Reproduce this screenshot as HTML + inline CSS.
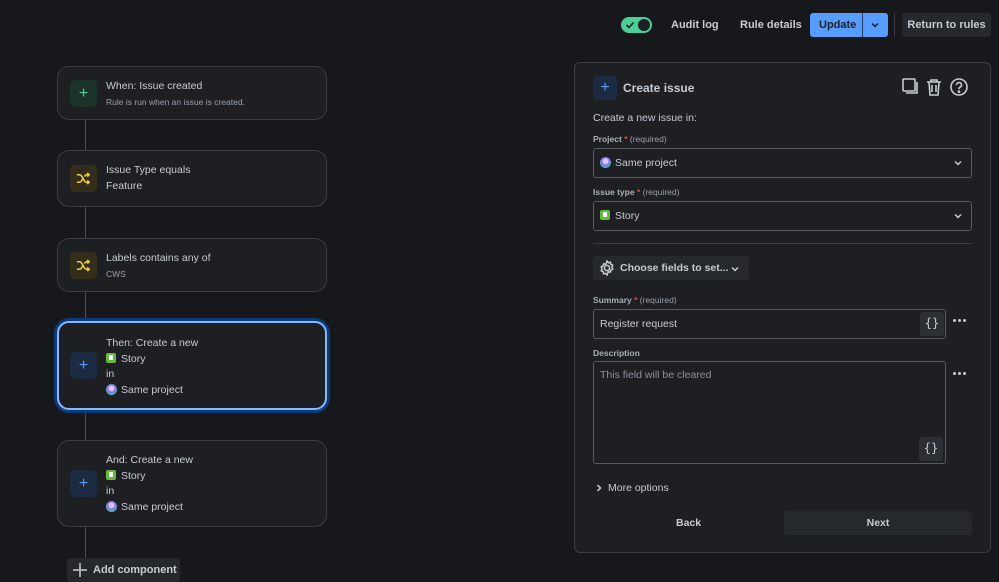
<!DOCTYPE html><html><head><style>
*{box-sizing:border-box;margin:0;padding:0}
body{width:999px;height:581px;background:#17181b;font-family:"Liberation Sans",sans-serif;color:#c7ccd3;position:relative;overflow:hidden;font-size:11px}
.a{position:absolute}
.card{position:absolute;left:57px;width:270px;border:1px solid #3a3e44;border-radius:12px;background:#1d1f23}
.ib{position:absolute;left:12px;width:27px;height:27px;border-radius:5px;display:flex;align-items:center;justify-content:center}
.t{position:absolute;left:48px;font-size:10.5px;line-height:15.5px;color:#c7ccd3}
.s{font-size:8.5px;color:#9aa1aa}
.line{position:absolute;left:85px;width:1px;background:#4a4e55}
.story{display:inline-block;width:10px;height:10px;background:#63ba3c;border-radius:2px;vertical-align:-1px;margin-right:5px;position:relative}
.story:after{content:"";position:absolute;left:3px;top:2px;width:4px;height:5px;background:#fff}
.proj{display:inline-block;width:11px;height:11px;border-radius:50%;background:radial-gradient(circle at 50% 40%,#d9c7ff 0 25%,#8a6bd8 45%,#3fc6c9 75%);vertical-align:-2px;margin-right:4px}
.lbl{position:absolute;left:593px;font-size:8.5px;font-weight:bold;color:#a9b0b8}
.lbl i{color:#e5493a;font-style:normal}.lbl b{font-weight:normal;color:#9aa1aa}
.sel{position:absolute;left:593px;width:379px;height:30px;border:1px solid #565b62;border-radius:3px;background:#1d1f23;padding-left:6px;line-height:28px;font-size:10.5px}
.chev{position:absolute;right:9px;top:11px}
.br{position:absolute;width:24px;height:24px;background:#2c2f34;border-radius:3px;font-family:"DejaVu Sans Mono",monospace;font-size:12px;text-align:center;line-height:23px;color:#c7ccd3}
.dots{position:absolute;left:953px;width:16px;height:4px}
.dots i{float:left;width:3px;height:3px;border-radius:50%;background:#c7ccd3;margin-right:2px}
</style></head><body>
<svg width="0" height="0" style="position:absolute"><defs>
<symbol id="cv" viewBox="0 0 8 6"><path d="M1 1.5l3 3 3-3" fill="none" stroke="currentColor" stroke-width="1.5"/></symbol>
<symbol id="sh" viewBox="0 0 16 16"><path d="M1 4h3c3 0 4 8 7 8h3M1 12h3c1.5 0 2.3-2 3-3.5M9 6c.8-1.3 1.5-2 2-2h3M12 2l2 2-2 2M12 10l2 2-2 2" fill="none" stroke="#f5cd47" stroke-width="1.6"/></symbol>
</defs></svg>
<!-- top bar -->
<div class="a" style="left:621px;top:17px;width:31px;height:16px;border-radius:8px;background:#4bce97"></div>
<div class="a" style="left:638px;top:19px;width:12px;height:12px;border-radius:50%;background:#1d1f23"></div>
<svg class="a" style="left:625px;top:20px" width="10" height="10"><path d="M1.5 5l2.5 2.5 4.5-5" fill="none" stroke="#1d1f23" stroke-width="1.6"/></svg>
<div class="a" style="left:671px;top:19px;font-size:11px;font-weight:bold;color:#c7ccd3">Audit log</div>
<div class="a" style="left:740px;top:19px;font-size:11px;font-weight:bold;color:#c7ccd3">Rule details</div>
<div class="a" style="left:810px;top:13px;width:78px;height:24px;background:#579dff;border-radius:3px"></div>
<div class="a" style="left:862px;top:13px;width:1px;height:24px;background:#1d3a66"></div>
<div class="a" style="left:819px;top:19px;font-size:11px;font-weight:bold;color:#1d2125">Update</div>
<svg class="a" style="left:871px;top:22px;color:#1d2125" width="8" height="6"><use href="#cv"/></svg>
<div class="a" style="left:894px;top:13px;width:1px;height:24px;background:#3a3e44"></div>
<div class="a" style="left:902px;top:13px;width:89px;height:24px;background:#25282c;border-radius:3px;font-size:11px;font-weight:bold;text-align:center;line-height:24px">Return to rules</div>

<!-- left flow -->
<div class="line" style="top:119px;height:31px"></div>
<div class="line" style="top:207px;height:31px"></div>
<div class="line" style="top:291px;height:31px"></div>
<div class="line" style="top:409px;height:31px"></div>
<div class="line" style="top:526px;height:32px"></div>

<div class="card" style="top:66px;height:54px">
 <div class="ib" style="top:13px;background:#1c3329;color:#4bce97;font-size:16px">+</div>
 <div class="t" style="top:12px">When: Issue created<br><span class="s">Rule is run when an issue is created.</span></div>
</div>
<div class="card" style="top:150px;height:57px">
 <div class="ib" style="top:14px;background:#332e1b"><svg width="15" height="15"><use href="#sh"/></svg></div>
 <div class="t" style="top:12px">Issue Type equals<br>Feature</div>
</div>
<div class="card" style="top:238px;height:54px">
 <div class="ib" style="top:13px;background:#332e1b"><svg width="15" height="15"><use href="#sh"/></svg></div>
 <div class="t" style="top:12px">Labels contains any of<br><span class="s">CWS</span></div>
</div>
<div class="card" style="top:321px;height:89px;border:2px solid #85b8ff;box-shadow:0 0 0 3px #0c3a78">
 <div class="ib" style="top:29px;left:11px;background:#1c2b41;color:#579dff;font-size:16px">+</div>
 <div class="t" style="top:13px;left:47px">Then: Create a new<br><span class="story"></span>Story<br>in<br><span class="proj"></span>Same project</div>
</div>
<div class="card" style="top:440px;height:87px">
 <div class="ib" style="top:29px;background:#1c2b41;color:#579dff;font-size:16px">+</div>
 <div class="t" style="top:12px">And: Create a new<br><span class="story"></span>Story<br>in<br><span class="proj"></span>Same project</div>
</div>
<div class="a" style="left:67px;top:558px;width:113px;height:24px;background:#25282c;border-radius:3px;font-size:11px;font-weight:bold;line-height:24px;padding-left:26px">Add component</div>
<svg class="a" style="left:73px;top:563px" width="14" height="14"><path d="M7 0v14M0 7h14" stroke="#c7ccd3" stroke-width="1.5"/></svg>

<!-- right panel -->
<div class="a" style="left:574px;top:62px;width:417px;height:491px;border:1px solid #3a3e44;border-radius:6px;background:#1d1f23"></div>
<div class="a" style="left:593px;top:76px;width:24px;height:24px;border-radius:4px;background:#1c2b41;color:#579dff;font-size:16px;text-align:center;line-height:23px">+</div>
<div class="a" style="left:623px;top:81px;font-size:12px;font-weight:bold;color:#c7ccd3">Create issue</div>
<svg class="a" style="left:900px;top:77px" width="70" height="20" viewBox="0 0 70 20" fill="none" stroke="#c7ccd3" stroke-width="1.6">
 <rect x="3" y="2" width="12" height="12" rx="1"/><path d="M17 5v11H6"/>
 <path d="M27 5h14M31 5V3h6v2M29 5l1 13h8l1-13M32 8v7M36 8v7"/>
 <circle cx="59" cy="10" r="8"/><path d="M56.5 8a2.5 2.5 0 1 1 3.5 2.3c-1 .4-1 1-1 2"/><circle cx="59" cy="14.6" r=".6" fill="#c7ccd3"/>
</svg>
<div class="a" style="left:593px;top:112px;font-size:10.5px">Create a new issue in:</div>
<div class="lbl" style="top:134px">Project <i>*</i> <b>(required)</b></div>
<div class="sel" style="top:148px"><span class="proj"></span>Same project<svg class="chev" width="8" height="6"><use href="#cv"/></svg></div>
<div class="lbl" style="top:187px">Issue type <i>*</i> <b>(required)</b></div>
<div class="sel" style="top:201px"><span class="story"></span>Story<svg class="chev" width="8" height="6"><use href="#cv"/></svg></div>
<div class="a" style="left:593px;top:243px;width:379px;height:1px;background:#3a3e44"></div>
<div class="a" style="left:593px;top:256px;width:156px;height:24px;background:#25282c;border-radius:3px;font-size:10.5px;font-weight:bold;line-height:24px;padding-left:27px">Choose fields to set...</div>
<svg class="a" style="left:731px;top:266px" width="8" height="6"><use href="#cv"/></svg>
<svg class="a" style="left:599px;top:260px" width="16" height="16" viewBox="0 0 16 16"><path d="M8 1l1.3 1.7 2.1-.5.4 2.1 2 .9-.9 2 .9 2-2 .9-.4 2.1-2.1-.5L8 15l-1.3-1.7-2.1.5-.4-2.1-2-.9.9-2-.9-2 2-.9.4-2.1 2.1.5z" fill="none" stroke="#c7ccd3" stroke-width="1.5"/><circle cx="8" cy="8" r="2.6" fill="none" stroke="#c7ccd3" stroke-width="1.5"/></svg>
<div class="lbl" style="top:295px">Summary <i>*</i> <b>(required)</b></div>
<div class="sel" style="top:309px;width:353px;height:30px">Register request</div>
<div class="br" style="left:920px;top:312px">{}</div>
<div class="dots" style="top:319px"><i></i><i></i><i></i></div>
<div class="lbl" style="top:348px">Description</div>
<div class="sel" style="top:361px;width:353px;height:103px;line-height:normal;padding-top:7px;color:#8c939c">This field will be cleared</div>
<div class="br" style="left:919px;top:437px">{}</div>
<div class="dots" style="top:372px"><i></i><i></i><i></i></div>
<svg class="a" style="left:596px;top:484px" width="6" height="8"><path d="M1.5 1l3 3-3 3" fill="none" stroke="#c7ccd3" stroke-width="1.5"/></svg>
<div class="a" style="left:608px;top:482px;font-size:10.5px">More options</div>
<div class="a" style="left:676px;top:517px;font-size:10.5px;font-weight:bold">Back</div>
<div class="a" style="left:784px;top:511px;width:188px;height:24px;background:#25282c;border-radius:3px;font-size:10.5px;font-weight:bold;text-align:center;line-height:24px">Next</div>
</body></html>
